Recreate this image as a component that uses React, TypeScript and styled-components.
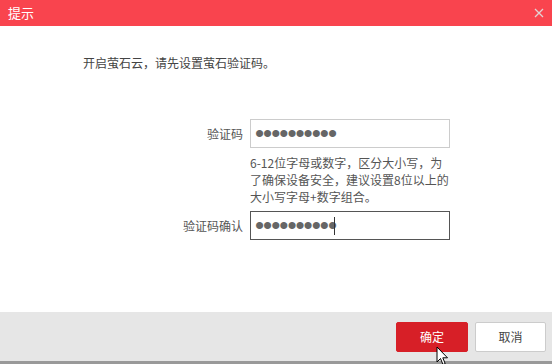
import styled, { createGlobalStyle } from "styled-components";

const GlobalStyle = createGlobalStyle`
  html, body {
    margin: 0;
    padding: 0;
    background: #ffffff;
  }
  body {
    font-family: "Noto Sans CJK SC", "Noto Sans", sans-serif;
    font-size: 12px;
    color: #444;
  }
`;

const Dialog = styled.div`
  position: relative;
  width: 552px;
  height: 364px;
  display: flex;
  flex-direction: column;
  background: #fff;
  overflow: hidden;
`;

const Header = styled.div`
  height: 26px;
  flex-shrink: 0;
  background: #f9444e;
  display: flex;
  align-items: center;
  justify-content: space-between;
  padding: 0 6px 0 8px;
`;

const Title = styled.h1`
  margin: 0;
  font-size: 13px;
  font-weight: normal;
  color: #fff;
  line-height: 26px;
`;

const CloseButton = styled.button`
  width: 14px;
  height: 14px;
  padding: 0;
  border: none;
  background: none;
  display: flex;
  align-items: center;
  justify-content: center;
`;

const Body = styled.div`
  flex: 1;
  display: flex;
  flex-direction: column;
`;

const Message = styled.p`
  margin: 28px 0 0 83px;
  line-height: 18px;
  font-size: 12px;
  color: #444;
`;

const Form = styled.div`
  margin-top: 47px;
  display: flex;
  flex-direction: column;
`;

const Row = styled.div`
  display: flex;
  align-items: center;
`;

const Label = styled.label`
  width: 250px;
  padding-right: 7px;
  box-sizing: border-box;
  text-align: right;
  font-size: 12px;
  color: #555;
`;

const Field = styled.div`
  position: relative;
  display: flex;
`;

const Input = styled.input<{ $active?: boolean }>`
  width: 200px;
  height: 29px;
  box-sizing: border-box;
  margin: 0;
  padding: 0 4px;
  border: 1px solid ${(p) => (p.$active ? "#555" : "#ccc")};
  outline: none;
  background: #fff;
  font-family: "Liberation Sans", sans-serif;
  font-size: 26px;
  letter-spacing: -1px;
  color: #666;
  caret-color: transparent;
`;

const Caret = styled.span`
  position: absolute;
  left: 84px;
  top: 6px;
  width: 1px;
  height: 18px;
  background: #333;
`;

const Hint = styled.p`
  margin: 6px 0 6px 250px;
  width: 202px;
  font-size: 12px;
  line-height: 17px;
  color: #555;
`;

const Footer = styled.div`
  height: 49px;
  flex-shrink: 0;
  background: #e6e6e6;
  border-bottom: 3px solid #999;
  display: flex;
  align-items: center;
  justify-content: flex-end;
  gap: 7px;
  padding-right: 6px;
`;

const Button = styled.button<{ $primary?: boolean }>`
  width: ${(p) => (p.$primary ? "72px" : "71px")};
  height: 30px;
  box-sizing: border-box;
  border-radius: 2px;
  border: 1px solid ${(p) => (p.$primary ? "#d71f27" : "#ccc")};
  background: ${(p) => (p.$primary ? "#d71f27" : "#fff")};
  color: ${(p) => (p.$primary ? "#fff" : "#444")};
  font-family: "Noto Sans CJK SC", sans-serif;
  font-size: 12px;
  padding: 0;
`;

const Pointer = styled.svg`
  position: absolute;
  left: 436px;
  top: 346px;
`;

export default function App() {
  return (
    <>
      <GlobalStyle />
      <Dialog>
        <Header>
          <Title>提示</Title>
          <CloseButton aria-label="关闭">
            <svg width="10" height="10" viewBox="0 0 10 10">
              <path d="M1 1 L9 9 M9 1 L1 9" stroke="#e2d3d4" strokeWidth="1.3" />
            </svg>
          </CloseButton>
        </Header>
        <Body>
          <Message>开启萤石云，请先设置萤石验证码。</Message>
          <Form>
            <Row>
              <Label>验证码</Label>
              <Field>
                <Input type="password" readOnly defaultValue="1234567890" />
              </Field>
            </Row>
            <Hint>6-12位字母或数字，区分大小写，为了确保设备安全，建议设置8位以上的大小写字母+数字组合。</Hint>
            <Row>
              <Label>验证码确认</Label>
              <Field>
                <Input $active type="password" defaultValue="1234567890" />
                <Caret />
              </Field>
            </Row>
          </Form>
        </Body>
        <Footer>
          <Button $primary>确定</Button>
          <Button>取消</Button>
        </Footer>
        <Pointer width="13" height="20" viewBox="0 0 13 20">
          <path d="M1 1 L1 16 L4.5 12.5 L7 18.5 L9.2 17.6 L6.8 11.8 L11.5 11.8 Z" fill="#fff" stroke="#000" strokeWidth="1" />
        </Pointer>
      </Dialog>
    </>
  );
}
